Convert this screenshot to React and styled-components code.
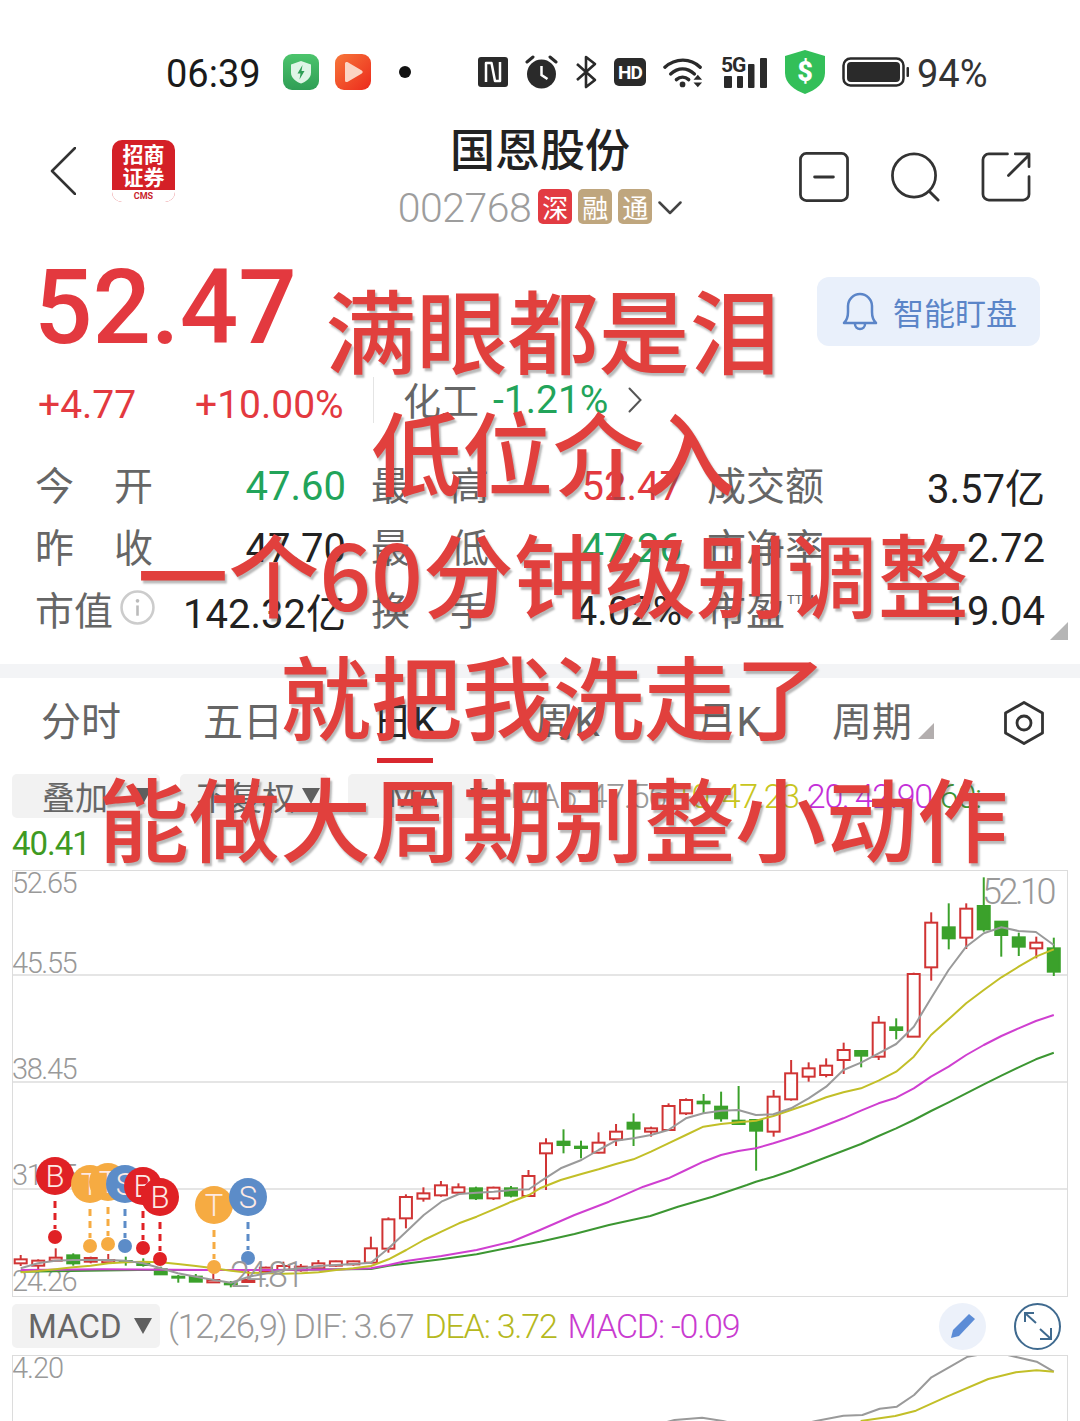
import React from 'react';
import styled, { createGlobalStyle } from 'styled-components';

const SANS = `Roboto, "Noto Sans CJK SC", sans-serif`;

const GlobalStyle = createGlobalStyle`
  html, body { margin: 0; padding: 0; background: #fff; }
  body { font-family: ${SANS}; }
`;

const Page = styled.div`
  position: relative;
  width: 1080px;
  height: 1421px;
  overflow: hidden;
  background: #fff;
`;

/* status bar */
const StatusBar = styled.div`
  display: flex;
  align-items: center;
  height: 44px;
  padding: 50px 0 30px 166px;
`;
const Time = styled.span`
  font-size: 38px;
  color: #1a1a1a;
  width: 94px;
  margin: 3px 23px 0 0;
  white-space: nowrap;
`;
const StatusGroup = styled.div`
  display: flex;
  align-items: center;
  gap: ${(p) => p.$gap}px;
  margin-left: ${(p) => p.$ml || 0}px;
`;
const Battery = styled.span`
  font-size: 38px;
  color: #333;
  margin: 3px 0 0 -9px;
`;

/* header */
const Header = styled.div`
  display: grid;
  grid-template-columns: 1fr auto 1fr;
  height: 116px;
`;
const HeaderLeft = styled.div`
  display: flex;
  align-items: center;
  gap: 36px;
  padding-left: 50px;
  height: 94px;
`;
const Logo = styled.div`
  width: 63px;
  height: 62px;
  border-radius: 10px;
  overflow: hidden;
  background: #d42027;
  display: flex;
  flex-direction: column;
  align-items: center;
`;
const LogoText = styled.div`
  color: #fff;
  font-family: "Noto Sans CJK SC", sans-serif;
  font-weight: 700;
  font-size: 21px;
  line-height: 23px;
  width: 44px;
  height: 50px;
  padding-top: 2px;
  box-sizing: border-box;
  text-align: center;
`;
const LogoFoot = styled.div`
  width: 100%;
  height: 12px;
  background: #fff;
  color: #c8232a;
  font-size: 9px;
  font-weight: 700;
  line-height: 13px;
  text-align: center;
`;
const HeaderCenter = styled.div`
  display: flex;
  flex-direction: column;
  align-items: center;
  margin-top: -3px;
`;
const Title = styled.div`
  font-family: "Noto Sans CJK SC", sans-serif;
  font-size: 45px;
  font-weight: 500;
  line-height: 54px;
  color: #222;
`;
const CodeRow = styled.div`
  display: flex;
  align-items: center;
  margin-top: 4px;
  height: 58px;
`;
const Code = styled.span`
  font-size: 41px;
  font-weight: 300;
  letter-spacing: -0.5px;
  color: #9d9d9d;
  margin-right: 7px;
`;
const Tag = styled.span`
  width: 34px;
  height: 35px;
  margin: -3px 6px 0 0;
  border-radius: 5px;
  background: ${(p) => p.$bg};
  color: #fff;
  font-family: "Noto Sans CJK SC", sans-serif;
  font-size: 26px;
  line-height: 35px;
  text-align: center;
`;
const HeaderRight = styled.div`
  display: flex;
  justify-content: flex-end;
  align-items: center;
  gap: 41px;
  height: 106px;
  padding-right: 49px;
`;

/* quote */
const PriceRow = styled.div`
  display: flex;
  justify-content: space-between;
  align-items: center;
  height: 132px;
  padding: 0 40px 0 34px;
`;
const Price = styled.div`
  font-size: 103px;
  font-weight: 500;
  color: #e3393f;
  line-height: 100px;
  margin-top: 4px;
`;
const WatchButton = styled.div`
  display: flex;
  align-items: center;
  gap: 14px;
  width: 223px;
  height: 69px;
  box-sizing: border-box;
  margin-top: 10px;
  padding-left: 24px;
  border-radius: 12px;
  background: #e9f0fb;
  color: #5b85c8;
  font-family: "Noto Sans CJK SC", sans-serif;
  font-size: 31px;
`;
const SubRow = styled.div`
  display: flex;
  align-items: center;
  height: 56px;
  padding-left: 38px;
  font-size: 39px;
  color: #e3393f;
`;
const Change = styled.span`
  width: ${(p) => p.$w}px;
  margin-top: 10px;
  white-space: nowrap;
`;
const Divider = styled.div`
  width: 1px;
  height: 46px;
  background: #e4e4e4;
  margin: 0 29px 0 29px;
`;
const Sector = styled.span`
  font-family: "Noto Sans CJK SC", sans-serif;
  color: #666;
  font-size: 38px;
  margin: -4px 14px 0 0;
`;
const SectorPct = styled.span`
  color: #22a45a;
  margin-right: 20px;
`;
const Stats = styled.div`
  display: grid;
  grid-template-columns: 309px 309px 336px;
  column-gap: 27px;
  grid-auto-rows: 62.5px;
  position: relative;
  margin-top: 26px;
  padding: 0 36px 0 37px;
`;
const Stat = styled.div`
  display: flex;
  align-items: center;
  justify-content: space-between;
`;
const StatLabel = styled.span`
  display: flex;
  justify-content: ${(p) => (p.$spread ? 'space-between' : 'flex-start')};
  align-items: center;
  width: ${(p) => (p.$spread ? '118px' : 'auto')};
  margin: -5px 0 0 -2px;
  font-family: "Noto Sans CJK SC", sans-serif;
  font-size: 39px;
  color: #666;
  white-space: nowrap;
`;
const Ttm = styled.span`
  font-family: ${SANS};
  font-size: 13px;
  align-self: flex-start;
  margin: 12px 0 0 2px;
`;
const StatValue = styled.span`
  margin-top: 2px;
  color: ${(p) => p.$color || '#222'};
  font-size: 40px;
  white-space: nowrap;
`;
const Corner = styled.div`
  position: absolute;
  right: 12px;
  bottom: 2px;
  width: 0;
  height: 0;
  border-style: solid;
  border-width: 0 0 18px 18px;
  border-color: transparent transparent #b5b5b5 transparent;
`;
const Band = styled.div`
  height: 14px;
  margin-top: 22px;
  background: #f3f4f6;
`;

/* tabs */
const Tabs = styled.div`
  display: grid;
  grid-template-columns: repeat(6, 162px) 1fr;
  align-items: center;
  height: 89px;
`;
const Tab = styled.div`
  position: relative;
  justify-self: center;
  display: flex;
  align-items: center;
  gap: 6px;
  margin-left: ${(p) => p.$shift || 0}px;
  font-size: 40px;
  color: ${(p) => (p.$active ? '#222' : '#666')};
  line-height: 90px;
  white-space: nowrap;
  ${(p) => p.$active && `
    &::after {
      content: '';
      position: absolute;
      left: 5px;
      right: 5px;
      bottom: 5px;
      height: 5px;
      background: #d9282f;
    }
  `}
`;
const TabCorner = styled.i`
  width: 0;
  height: 0;
  margin-top: 16px;
  border-style: solid;
  border-width: 0 0 16px 16px;
  border-color: transparent transparent #b3aeae transparent;
`;
const TabIcon = styled.div`
  justify-self: end;
  display: flex;
  padding-right: 36px;
`;

/* indicator rows */
const OptionRow = styled.div`
  display: flex;
  align-items: center;
  gap: 20px;
  height: 44px;
  margin-top: 7px;
  padding-left: 12px;
`;
const Chip = styled.div`
  display: flex;
  align-items: center;
  justify-content: space-between;
  box-sizing: border-box;
  width: 148px;
  height: 44px;
  padding: 0 8px 0 ${(p) => p.$pl || 30}px;
  border-radius: 5px;
  background: #f2f2f2;
  font-size: 33px;
  color: #666;
  white-space: nowrap;
`;
const Caret = styled.i`
  width: 0;
  height: 0;
  border-style: solid;
  border-width: 16px 9px 0 9px;
  border-color: #5f5f5f transparent transparent transparent;
`;
const Legend = styled.div`
  display: flex;
  gap: 8px;
  margin-left: -6px;
  font-size: 34px;
  font-weight: 300;
  letter-spacing: -1.3px;
  white-space: nowrap;
`;
const Val = styled.span`
  color: ${(p) => p.$color};
`;
const MaxLabel = styled.div`
  height: 34px;
  margin: 9px 0 9px 12px;
  font-size: 33px;
  letter-spacing: -1px;
  line-height: 34px;
  color: #3f9a23;
`;
const ChartBox = styled.div`
  box-sizing: border-box;
  width: 1056px;
  height: ${(p) => p.$h}px;
  margin: ${(p) => p.$mt || 0}px 0 0 12px;
  border: 1.5px solid #dcdcdc;
  overflow: hidden;
  svg { display: block; margin: -1.5px; }
`;
const MacdRow = styled.div`
  display: flex;
  align-items: center;
  height: 43px;
  margin-top: 8px;
  padding-left: 12px;
  white-space: nowrap;
`;
const MacdLegend = styled.div`
  display: flex;
  gap: 11px;
  margin-left: 8px;
  font-size: 34px;
  font-weight: 300;
  letter-spacing: -1.2px;
`;
const RoundButton = styled.div`
  display: flex;
  align-items: center;
  justify-content: center;
  box-sizing: border-box;
  width: 47px;
  height: 47px;
  border-radius: 50%;
  background: ${(p) => p.$bg || 'transparent'};
  border: ${(p) => (p.$outline ? '2px solid #3f6a8f' : 'none')};
`;
const MacdTools = styled.div`
  display: flex;
  gap: 28px;
  margin-left: auto;
  padding-right: 19px;
`;

/* the red caption typed over the screenshot */
const Caption = styled.div`
  position: absolute;
  top: 266px;
  left: 26px;
  right: 0;
  display: flex;
  flex-direction: column;
  align-items: center;
  font-family: "Noto Sans CJK SC", sans-serif;
  font-size: 91px;
  font-weight: 500;
  line-height: 122px;
  color: #e1403d;
  text-shadow: 2px 3px 2px rgba(80, 80, 80, 0.4);
  white-space: nowrap;
`;

/* ---------- status icons ---------- */
const SafeApp = () => (
  <svg width="36" height="36" viewBox="0 0 36 36">
    <defs>
      <linearGradient id="safeBg" x1="0" y1="0" x2="0" y2="1">
        <stop offset="0" stopColor="#4cc46c" />
        <stop offset="1" stopColor="#2f9e55" />
      </linearGradient>
    </defs>
    <rect width="36" height="36" rx="9" fill="url(#safeBg)" />
    <path d="M18 7l10 3.5v8c0 5.5-4.5 9-10 11-5.5-2-10-5.5-10-11v-8z" fill="#dff5e6" />
    <path d="M19.5 11l-5 8.5h3l-1 6 5-8.500h-3z" fill="#2f9e55" />
  </svg>
);
const PlayApp = () => (
  <svg width="36" height="36" viewBox="0 0 36 36">
    <defs>
      <linearGradient id="playBg" x1="0" y1="0" x2="1" y2="1">
        <stop offset="0" stopColor="#f7773a" />
        <stop offset="1" stopColor="#ec2a1c" />
      </linearGradient>
    </defs>
    <rect width="36" height="36" rx="9" fill="url(#playBg)" />
    <path d="M10 9.500c0-1.500 1.500-2 2.800-1.300l14 8.300c1.200.8 1.200 2.200 0 3l-14 8.300c-1.300.7-2.800.2-2.800-1.300z" fill="#fbd5c4" />
  </svg>
);
const NfcIcon = () => (
  <svg width="30" height="30" viewBox="0 0 30 30">
    <rect width="30" height="30" rx="3" fill="#2a2a2a" />
    <path d="M8 25V6h5.500l3.500 18h5V5" fill="none" stroke="#fff" strokeWidth="2.500" strokeLinejoin="round" />
  </svg>
);
const AlarmIcon = () => (
  <svg width="33" height="34" viewBox="0 0 33 34">
    <circle cx="16.500" cy="19" r="14.500" fill="#2a2a2a" />
    <path d="M16.500 11v9l6 4" fill="none" stroke="#fff" strokeWidth="2.500" />
    <path d="M2 7l6-5M31 7l-6-5" stroke="#2a2a2a" strokeWidth="3" strokeLinecap="round" />
  </svg>
);
const BluetoothIcon = () => (
  <svg width="22" height="34" viewBox="0 0 22 34">
    <path d="M2 9l18 16-9 7V2l9 7L2 25" fill="none" stroke="#2a2a2a" strokeWidth="2.600" strokeLinejoin="round" />
  </svg>
);
const HdIcon = () => (
  <svg width="32" height="28" viewBox="0 0 32 28">
    <rect width="32" height="28" rx="5" fill="#2a2a2a" />
    <text x="16" y="21" textAnchor="middle" fontFamily="Roboto" fontWeight="700" fontSize="19" letterSpacing="-1" fill="#fff">HD</text>
  </svg>
);
const WifiIcon = () => (
  <svg width="41" height="34" viewBox="0 0 43 34">
    <g fill="none" stroke="#2a2a2a" strokeWidth="3.500" strokeLinecap="round">
      <path d="M2 12c11-10 27-10 37 0" />
      <path d="M8 19c8-7 17-7 25 0" />
      <path d="M14 25c4-3.500 9-3.500 13 0" />
    </g>
    <circle cx="20.500" cy="30" r="3" fill="#2a2a2a" />
    <path d="M32 25l4.500-5 4.500 5zM32 28h9l-4.500 5z" fill="#2a2a2a" />
  </svg>
);
const SignalIcon = () => (
  <svg width="47" height="32" viewBox="0 0 47 32">
    <text x="0" y="16" fontFamily="Roboto" fontWeight="700" fontSize="21" letterSpacing="-1" fill="#2a2a2a">5G</text>
    <rect x="3" y="20" width="8" height="12" rx="1" fill="#2a2a2a" />
    <rect x="16" y="20" width="6" height="12" rx="1" fill="#2a2a2a" />
    <rect x="27" y="8" width="6.500" height="24" rx="1" fill="#2a2a2a" />
    <rect x="39" y="2" width="7" height="30" rx="1" fill="#2a2a2a" />
  </svg>
);
const GuardIcon = () => (
  <svg width="40" height="44" viewBox="0 0 40 44">
    <path d="M20 0l20 6v17c0 10-9 17-20 21C9 40 0 33 0 23V6z" fill="#33bf59" />
    <text x="20" y="31" textAnchor="middle" fontFamily="Roboto" fontWeight="900" fontSize="27" fill="#fff">$</text>
  </svg>
);
const BatteryIcon = () => (
  <svg width="67" height="30" viewBox="0 0 67 30">
    <rect x="1.500" y="1.500" width="60" height="27" rx="7" fill="none" stroke="#2a2a2a" strokeWidth="2.500" />
    <rect x="5" y="5" width="53" height="20" rx="4" fill="#2a2a2a" />
    <rect x="64.500" y="10" width="2.500" height="10" rx="1" fill="#2a2a2a" />
  </svg>
);

/* ---------- chart data, read off the reference ---------- */
const fromLeft = (pts) => pts.map(([x, y]) => [x / 2.9, 1100 + y / 3]);
const fromMid = (pts) => pts.map(([x, y]) => [540 + x / 2.9, 1180 + y / 3]);
const fromRight = (pts) => pts.map(([x, y]) => [540 + x / 2.9, 870 + y / 3]);
const toPoints = (pts) => pts.map(([x, y]) => `${x.toFixed(1)},${y.toFixed(1)}`).join(' ');

const CANDLES_LEFT = [
  [465, 498, 478, 490, 'r'], [478, 510, 482, 497, 'r'], [445, 482, 473, 482, 'r'], [460, 497, 466, 490, 'g'],
  [470, 490, 474, 485, 'r'], [462, 490, 480, 487, 'r'], [470, 497, 483, 485, 'g'], [475, 500, 488, 495, 'g'],
  [500, 525, 508, 523, 'g'], [525, 548, 530, 533, 'g'], [522, 546, 530, 545, 'g'], [520, 548, 540, 547, 'r'],
  [543, 562, 550, 553, 'g'], [510, 548, 540, 546, 'r'], [500, 518, 503, 515, 'r'], [485, 515, 498, 510, 'r'],
  [492, 515, 500, 511, 'r'], [480, 510, 490, 505, 'r'], [482, 500, 484, 497, 'r'], [482, 497, 484, 493, 'r'],
  [410, 490, 445, 488, 'r'], [352, 458, 358, 446, 'r'], [283, 385, 291, 355, 'r'], [262, 305, 280, 296, 'r'],
  [243, 290, 256, 286, 'r'], [250, 285, 262, 278, 'r'], [260, 300, 265, 295, 'g'], [260, 300, 263, 295, 'r'],
  [258, 292, 265, 287, 'g'], [210, 290, 228, 288, 'r'],
];
const CANDLES_RIGHT = [
  [805, 960, 820, 850, 'r'], [778, 850, 815, 825, 'g'], [812, 865, 830, 834, 'g'], [787, 850, 818, 848, 'r'],
  [762, 828, 785, 808, 'r'], [730, 828, 758, 776, 'g'], [770, 800, 775, 785, 'r'], [700, 780, 708, 780, 'r'],
  [685, 735, 690, 730, 'r'], [672, 730, 695, 700, 'g'], [665, 755, 710, 745, 'g'], [648, 765, 752, 762, 'g'],
  [750, 902, 750, 782, 'g'], [660, 800, 680, 785, 'r'], [570, 692, 610, 688, 'r'], [577, 635, 595, 620, 'r'],
  [565, 622, 587, 615, 'r'], [518, 612, 540, 570, 'r'], [540, 592, 543, 557, 'g'], [438, 570, 458, 560, 'r'],
  [445, 508, 472, 480, 'g'], [308, 500, 312, 500, 'r'], [127, 332, 158, 292, 'r'], [100, 238, 172, 205, 'g'],
  [100, 237, 116, 203, 'r'], [22, 185, 108, 178, 'g'], [155, 260, 155, 195, 'g'], [188, 258, 202, 230, 'g'],
  [200, 265, 218, 235, 'r'], [203, 318, 235, 305, 'g'],
];
const toCandles = (rows, base) => rows.map(([wt, wb, bt, bb, c]) => ({
  wickTop: base + wt / 3, wickBottom: base + wb / 3, bodyTop: base + bt / 3, bodyBottom: base + bb / 3, color: c,
}));
const CANDLES = [...toCandles(CANDLES_LEFT, 1100), ...toCandles(CANDLES_RIGHT, 870)];

const GRAY_LINE = [
  ...fromLeft([[60, 505], [110, 490], [160, 482], [212, 480], [263, 480], [315, 480], [365, 482], [415, 490], [466, 505], [516, 520], [568, 530], [620, 540], [670, 548], [722, 530], [773, 520], [823, 510], [874, 505], [924, 498], [975, 495], [1025, 492], [1076, 488], [1127, 445], [1178, 395], [1229, 345], [1280, 305], [1331, 282], [1382, 278], [1432, 275], [1483, 270], [1534, 268]]),
  ...fromRight([[0, 935], [60, 895], [120, 870], [170, 840], [220, 812], [271, 805], [322, 795], [372, 780], [423, 745], [474, 730], [525, 722], [575, 720], [626, 735], [677, 733], [728, 715], [779, 685], [830, 650], [880, 600], [931, 578], [982, 550], [1033, 522], [1084, 470], [1134, 385], [1185, 300], [1236, 230], [1287, 190], [1338, 172], [1388, 183], [1438, 186], [1490, 225]]),
];
const YELLOW_LINE = [
  ...fromLeft([[60, 517], [110, 513], [160, 508], [212, 502], [263, 497], [315, 490], [365, 487], [415, 485], [466, 487], [516, 492], [568, 498], [620, 505], [670, 512], [722, 518], [773, 520], [823, 521], [874, 520], [924, 517], [975, 510], [1025, 505], [1076, 498], [1127, 478], [1178, 450], [1229, 420], [1280, 395], [1331, 370], [1382, 350], [1432, 328], [1483, 305], [1534, 285]]),
  ...fromRight([[0, 955], [60, 930], [120, 912], [170, 898], [220, 882], [271, 868], [322, 845], [372, 820], [423, 795], [474, 770], [525, 762], [575, 757], [626, 752], [677, 738], [728, 720], [779, 702], [830, 682], [880, 667], [931, 655], [982, 632], [1033, 605], [1084, 560], [1134, 495], [1185, 448], [1236, 400], [1287, 360], [1338, 322], [1388, 290], [1438, 260], [1490, 238]]),
];
const PINK_LINE = [
  ...fromLeft([[60, 510], [300, 508], [600, 510], [800, 510], [1000, 508], [1076, 505], [1127, 495], [1178, 483], [1280, 468], [1382, 450], [1483, 425]]),
  ...fromMid([[0, 150], [100, 105], [200, 65], [300, 20]]),
  ...fromRight([[372, 925], [423, 900], [474, 875], [525, 855], [575, 843], [626, 835], [677, 820], [728, 803], [779, 785], [830, 765], [880, 745], [931, 722], [982, 700], [1033, 683], [1084, 655], [1134, 620], [1185, 590], [1236, 555], [1287, 525], [1338, 498], [1388, 475], [1438, 453], [1490, 435]]),
];
const GREEN_LINE = [
  ...fromLeft([[60, 515], [400, 510], [800, 510], [1076, 507], [1127, 497], [1280, 478], [1382, 463], [1483, 442]]),
  ...fromMid([[0, 185], [100, 162], [200, 135], [320, 108], [400, 80], [500, 50], [600, 15]]),
  ...fromRight([[626, 935], [677, 920], [728, 902], [779, 882], [830, 862], [880, 842], [931, 822], [982, 798], [1033, 775], [1084, 750], [1134, 723], [1185, 697], [1236, 670], [1287, 643], [1338, 617], [1388, 592], [1438, 568], [1490, 548]]),
];
const MACD_GRAY = fromMid([[200, 790], [300, 745], [390, 720], [470, 713], [530, 723], [620, 745], [720, 742], [800, 723], [880, 707], [935, 705], [985, 686], [1035, 680], [1085, 645], [1135, 592], [1190, 560], [1240, 530], [1290, 521], [1340, 521], [1440, 545], [1490, 575]]);
const MACD_YELLOW = fromMid([[930, 723], [1030, 708], [1090, 692], [1180, 650], [1300, 597], [1380, 577], [1440, 571], [1490, 575]]);

const SIGNAL_COLOR = { B: '#e02125', T: '#f6ab42', S: '#5c8cc8' };
const SIGNALS = [
  { k: 'B', x: 55, y: 1176, dot: 1237 },
  { k: 'T', x: 90, y: 1184, dot: 1246 },
  { k: 'T', x: 108, y: 1182, dot: 1244 },
  { k: 'S', x: 125, y: 1184, dot: 1246 },
  { k: 'B', x: 143, y: 1186, dot: 1248 },
  { k: 'B', x: 160, y: 1197, dot: 1259 },
  { k: 'T', x: 214, y: 1205, dot: 1267 },
  { k: 'S', x: 248, y: 1197, dot: 1258 },
];

const Candle = ({ x, c }) => {
  const stroke = c.color === 'r' ? '#d03434' : '#3ba12b';
  return (
    <g>
      <line x1={x} x2={x} y1={c.wickTop} y2={c.wickBottom} stroke={stroke} strokeWidth="2" />
      <rect
        x={x - 6}
        y={c.bodyTop}
        width="12"
        height={Math.max(c.bodyBottom - c.bodyTop, 1)}
        fill={c.color === 'r' ? '#fff' : stroke}
        stroke={stroke}
        strokeWidth="2"
      />
    </g>
  );
};

const Line = ({ pts, color }) => (
  <polyline points={toPoints(pts)} fill="none" stroke={color} strokeWidth="2" strokeLinejoin="round" />
);

const KChart = () => (
  <svg width="1056" height="427" viewBox="12 869 1056 427" fontFamily="Roboto" fontWeight="300">
    {[975, 1082, 1189].map((y) => (
      <line key={y} x1="12" x2="1068" y1={y} y2={y} stroke="#dcdcdc" strokeWidth="1.500" />
    ))}
    <g fontSize="29" fill="#999" letterSpacing="-1.400">
      <text x="12" y="893">52.65</text>
      <text x="12" y="973">45.55</text>
      <text x="12" y="1079">38.45</text>
      <text x="12" y="1185">31.35</text>
      <text x="12" y="1291">24.26</text>
    </g>
    {CANDLES.map((c, i) => <Candle key={i} x={20.7 + 17.51 * i} c={c} />)}
    <Line pts={GREEN_LINE} color="#3c9632" />
    <Line pts={PINK_LINE} color="#cf3fd0" />
    <Line pts={YELLOW_LINE} color="#c2bf28" />
    <Line pts={GRAY_LINE} color="#9a9a9a" />
    {SIGNALS.map((s, i) => (
      <line key={i} x1={s.x} x2={s.x} y1={s.y + 25} y2={s.dot - 8} stroke={SIGNAL_COLOR[s.k]} strokeWidth="3" strokeDasharray="7 5" />
    ))}
    {SIGNALS.map((s, i) => (
      <circle key={i} cx={s.x} cy={s.dot} r="7" fill={SIGNAL_COLOR[s.k]} />
    ))}
    {SIGNALS.map((s, i) => (
      <g key={i}>
        <circle cx={s.x} cy={s.y} r="19" fill={SIGNAL_COLOR[s.k]} />
        <text x={s.x} y={s.y + 11} textAnchor="middle" fontSize="31" fill="#fde9e4">{s.k}</text>
      </g>
    ))}
    <g fontSize="36" fill="#999" letterSpacing="-3.500">
      <text x="982" y="904">52.10</text>
      <text x="230" y="1287">24.81</text>
    </g>
  </svg>
);

const MacdChart = () => (
  <svg width="1056" height="67" viewBox="12 1354 1056 67" fontFamily="Roboto" fontWeight="300">
    <text x="12" y="1378" fontSize="29" fill="#999" letterSpacing="-1">4.20</text>
    <Line pts={MACD_GRAY} color="#9a9a9a" />
    <Line pts={MACD_YELLOW} color="#c2bf28" />
  </svg>
);

const StatCell = ({ label, spread, value, color, children }) => (
  <Stat>
    <StatLabel $spread={spread}>
      {spread ? label.split('').map((ch) => <span key={ch}>{ch}</span>) : label}
      {children}
    </StatLabel>
    <StatValue $color={color}>{value}</StatValue>
  </Stat>
);

const App = () => (
  <Page>
    <GlobalStyle />
    <StatusBar>
      <Time>06:39</Time>
      <StatusGroup $gap={16}>
        <SafeApp />
        <PlayApp />
      </StatusGroup>
      <StatusGroup $gap={0} $ml={28}>
        <svg width="12" height="12" viewBox="0 0 12 12"><circle cx="6" cy="6" r="6" fill="#111" /></svg>
      </StatusGroup>
      <StatusGroup $gap={17} $ml={67}>
        <NfcIcon />
        <AlarmIcon />
        <BluetoothIcon />
        <HdIcon />
        <WifiIcon />
        <SignalIcon />
        <GuardIcon />
        <BatteryIcon />
        <Battery>94%</Battery>
      </StatusGroup>
    </StatusBar>

    <Header>
      <HeaderLeft>
        <svg width="26" height="48" viewBox="0 0 26 48">
          <path d="M25 1L2 24l23 23" fill="none" stroke="#333" strokeWidth="2.500" strokeLinecap="round" strokeLinejoin="round" />
        </svg>
        <Logo>
          <LogoText>招商证券</LogoText>
          <LogoFoot>CMS</LogoFoot>
        </Logo>
      </HeaderLeft>
      <HeaderCenter>
        <Title>国恩股份</Title>
        <CodeRow>
          <Code>002768</Code>
          <Tag $bg="#e23b42">深</Tag>
          <Tag $bg="#bfa67e">融</Tag>
          <Tag $bg="#bfa67e">通</Tag>
          <svg width="24" height="14" viewBox="0 0 24 14">
            <path d="M1.500 1.500L12 12 22.500 1.500" fill="none" stroke="#444" strokeWidth="2.500" strokeLinecap="round" strokeLinejoin="round" />
          </svg>
        </CodeRow>
      </HeaderCenter>
      <HeaderRight>
        <svg width="50" height="50" viewBox="0 0 51 51">
          <rect x="1.500" y="1.500" width="48" height="48" rx="6" fill="none" stroke="#333" strokeWidth="2.800" />
          <path d="M16 25.500h19" stroke="#333" strokeWidth="3" strokeLinecap="round" />
        </svg>
        <svg width="50" height="50" viewBox="0 0 51 51">
          <circle cx="24.500" cy="24" r="22" fill="none" stroke="#333" strokeWidth="2.800" />
          <path d="M40 40l9 9" stroke="#333" strokeWidth="3" strokeLinecap="round" />
        </svg>
        <svg width="50" height="50" viewBox="0 0 51 51">
          <path d="M27 2H8a6 6 0 0 0-6 6v35a6 6 0 0 0 6 6h35a6 6 0 0 0 6-6V25" fill="none" stroke="#333" strokeWidth="2.800" strokeLinecap="round" />
          <path d="M28 24L49 3M35 2h14v13" fill="none" stroke="#333" strokeWidth="2.800" strokeLinecap="round" strokeLinejoin="round" />
        </svg>
      </HeaderRight>
    </Header>

    <PriceRow>
      <Price>52.47</Price>
      <WatchButton>
        <svg width="38" height="40" viewBox="0 0 38 40">
          <path d="M3 32c3-3 4-6 4-11v-6a12 12 0 0 1 24 0v6c0 5 1 8 4 11z" fill="none" stroke="#5b85c8" strokeWidth="2.500" strokeLinejoin="round" />
          <path d="M14 33a5 5 0 0 0 10 0" fill="none" stroke="#5b85c8" strokeWidth="2.500" />
        </svg>
        智能盯盘
      </WatchButton>
    </PriceRow>

    <SubRow>
      <Change $w={157}>+4.77</Change>
      <Change $w={149}>+10.00%</Change>
      <Divider />
      <Sector>化工</Sector>
      <SectorPct>-1.21%</SectorPct>
      <svg width="14" height="26" viewBox="0 0 14 26">
        <path d="M1.500 1.500L12.500 13 1.500 24.500" fill="none" stroke="#555" strokeWidth="2" strokeLinecap="round" />
      </svg>
    </SubRow>

    <Stats>
      <StatCell label="今开" spread value="47.60" color="#22a45a" />
      <StatCell label="最高" spread value="52.47" color="#e3393f" />
      <StatCell label="成交额" value="3.57亿" />
      <StatCell label="昨收" spread value="47.70" />
      <StatCell label="最低" spread value="47.26" color="#22a45a" />
      <StatCell label="市净率" value="2.72" />
      <StatCell label="市值" value="142.32亿">
        <svg width="35" height="35" viewBox="0 0 34 34" style={{ marginLeft: 7 }}>
          <circle cx="17" cy="17" r="15.500" fill="none" stroke="#ccc" strokeWidth="2.500" />
          <circle cx="17" cy="10.500" r="1.800" fill="#bbb" />
          <path d="M17 15v10" stroke="#bbb" strokeWidth="2.500" />
        </svg>
      </StatCell>
      <StatCell label="换手" spread value="4.02%" />
      <StatCell label="市盈" value="19.04">
        <Ttm>TTM</Ttm>
      </StatCell>
      <Corner />
    </Stats>
    <Band />

    <Tabs>
      <Tab>分时</Tab>
      <Tab>五日</Tab>
      <Tab $active>日K</Tab>
      <Tab>周K</Tab>
      <Tab>月K</Tab>
      <Tab $shift={-16}>周期<TabCorner /></Tab>
      <TabIcon>
        <svg width="40" height="44" viewBox="0 0 40 44">
          <path d="M20 1.500L38.500 12v20L20 42.500 1.500 32V12z" fill="none" stroke="#333" strokeWidth="2.800" strokeLinejoin="round" />
          <circle cx="20" cy="22" r="7" fill="none" stroke="#333" strokeWidth="2.800" />
        </svg>
      </TabIcon>
    </Tabs>

    <OptionRow>
      <Chip>叠加<Caret /></Chip>
      <Chip $pl={16}>不复权<Caret /></Chip>
      <Chip $pl={40}>MA<Caret /></Chip>
      <Legend>
        <Val $color="#999">MA5: 47.56</Val>
        <Val $color="#c8c520">10: 47.23</Val>
        <Val $color="#c42fd8">20: 42.90</Val>
        <Val $color="#3c9632">60:</Val>
      </Legend>
    </OptionRow>
    <MaxLabel>40.41</MaxLabel>
    <ChartBox $h={427}>
      <KChart />
    </ChartBox>

    <MacdRow>
      <Chip $pl={16}>MACD<Caret /></Chip>
      <MacdLegend>
        <Val $color="#999">(12,26,9) DIF: 3.67</Val>
        <Val $color="#b5b820">DEA: 3.72</Val>
        <Val $color="#c93bd0">MACD: -0.09</Val>
      </MacdLegend>
      <MacdTools>
        <RoundButton $bg="#ecf1fa">
          <svg width="28" height="28" viewBox="0 0 28 28">
            <path d="M20 2l6 5-16 17-8 2 2-8z" fill="#5c8cd6" />
          </svg>
        </RoundButton>
        <RoundButton $outline>
          <svg width="32" height="32" viewBox="0 0 32 32">
            <path d="M14 13L3 3M3 12V3h9M18 19l11 10M29 18v11H18" fill="none" stroke="#3f6a8f" strokeWidth="2" />
          </svg>
        </RoundButton>
      </MacdTools>
    </MacdRow>
    <ChartBox $h={70} $mt={7}>
      <MacdChart />
    </ChartBox>

    <Caption>
      <span>满眼都是泪</span>
      <span>低位介入</span>
      <span>一个60分钟级别调整</span>
      <span>就把我洗走了</span>
      <span>能做大周期别整小动作</span>
    </Caption>
  </Page>
);

export default App;
